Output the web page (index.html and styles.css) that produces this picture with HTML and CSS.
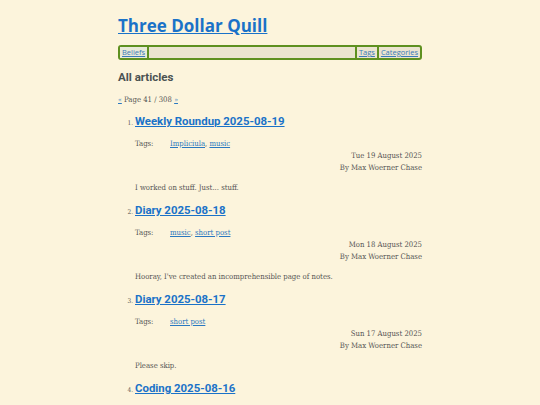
FILE: index.html
```html
<!DOCTYPE html>
<html>
<head>
<meta charset="utf-8">
<link rel="stylesheet" href="styles.css">
</head>
<body>
<div class="page">
  <h1 class="site-title"><a href="#">Three Dollar Quill</a></h1>
  <nav class="nav">
    <a class="nav-item" href="#">Beliefs</a>
    <span class="nav-fill"></span>
    <a class="nav-item" href="#">Tags</a>
    <a class="nav-item" href="#">Categories</a>
  </nav>
  <h2 class="section-title">All articles</h2>
  <p class="pager"><a href="#">«</a> Page 41 / 308 <a href="#">»</a></p>
  <ol class="articles">
    <li class="article">
      <h3 class="article-title"><a href="#">Weekly Roundup 2025-08-19</a></h3>
      <div class="tags"><span class="tags-label">Tags:</span><span><a href="#">Impliciula</a>, <a href="#">music</a></span></div>
      <div class="meta">Tue 19 August 2025<br>By Max Woerner Chase</div>
      <p class="summary">I worked on stuff. Just... stuff.</p>
    </li>
    <li class="article">
      <h3 class="article-title"><a href="#">Diary 2025-08-18</a></h3>
      <div class="tags"><span class="tags-label">Tags:</span><span><a href="#">music</a>, <a href="#">short post</a></span></div>
      <div class="meta">Mon 18 August 2025<br>By Max Woerner Chase</div>
      <p class="summary">Hooray, I've created an incomprehensible page of notes.</p>
    </li>
    <li class="article">
      <h3 class="article-title"><a href="#">Diary 2025-08-17</a></h3>
      <div class="tags"><span class="tags-label">Tags:</span><span><a href="#">short post</a></span></div>
      <div class="meta">Sun 17 August 2025<br>By Max Woerner Chase</div>
      <p class="summary">Please skip.</p>
    </li>
    <li class="article">
      <h3 class="article-title"><a href="#">Coding 2025-08-16</a></h3>
      <div class="tags"><span class="tags-label">Tags:</span><span><a href="#">programming</a></span></div>
      <div class="meta">Sat 16 August 2025<br>By Max Woerner Chase</div>
      <p class="summary">More work.</p>
    </li>
  </ol>
</div>
</body>
</html>
```
FILE: styles.css
```css
html, body {
  margin: 0;
  padding: 0;
  background: #fcf4dc;
}
body {
  font-family: "DejaVu Serif Condensed", "DejaVu Serif", serif;
  font-stretch: condensed;
  font-size: 7.7px;
  color: #555;
}
.page {
  width: 304px;
  margin: 0 auto;
  padding-top: 14px;
}
a {
  color: #2a78c0;
}
.site-title {
  margin: 0;
  font-family: "Open Sans", sans-serif;
  font-stretch: normal;
  font-weight: 700;
  font-size: 17px;
  line-height: 24px;
}
.site-title a {
  color: #1a72c8;
}
.nav {
  display: flex;
  margin-top: 7px;
  height: 11px;
  border: 2px solid #5e9020;
  border-radius: 3px;
  background: #ebe4d0;
  font-family: "Open Sans", sans-serif;
  font-stretch: normal;
  font-size: 7.5px;
  line-height: 11px;
}
.nav-item {
  padding: 0 2px;
  color: #3a7ab8;
}
.nav-item + .nav-fill,
.nav-fill + .nav-item,
.nav-item + .nav-item {
  border-left: 2px solid #5e9020;
}
.nav-item:first-child {
  background: #e8ead8;
}
.nav-fill {
  flex: 1;
}
.section-title {
  margin: 8px 0 0;
  font-family: "Roboto", sans-serif;
  font-stretch: normal;
  font-weight: 700;
  font-size: 11.5px;
  line-height: 18px;
  color: #4a5252;
}
.pager {
  margin: 8px 0 0;
  line-height: 12px;
  color: #555;
}
.pager a {
  font-size: 7px;
}
.articles {
  margin: 6px 0 0;
  padding-left: 17px;
}
.article {
  font-size: 6.5px;
}
.article-title {
  margin: 0;
  font-family: "Roboto", sans-serif;
  font-stretch: normal;
  font-weight: 700;
  font-size: 11.4px;
  line-height: 18px;
}
.article-title a {
  color: #1a72c8;
}
.tags {
  display: flex;
  margin-top: 7px;
  font-size: 7.7px;
  line-height: 13px;
}
.tags-label {
  width: 35px;
}
.meta {
  text-align: right;
  font-size: 7.7px;
  line-height: 12px;
}
.summary {
  margin: 8px 0 7px;
  font-size: 7.7px;
  line-height: 12px;
}
```
